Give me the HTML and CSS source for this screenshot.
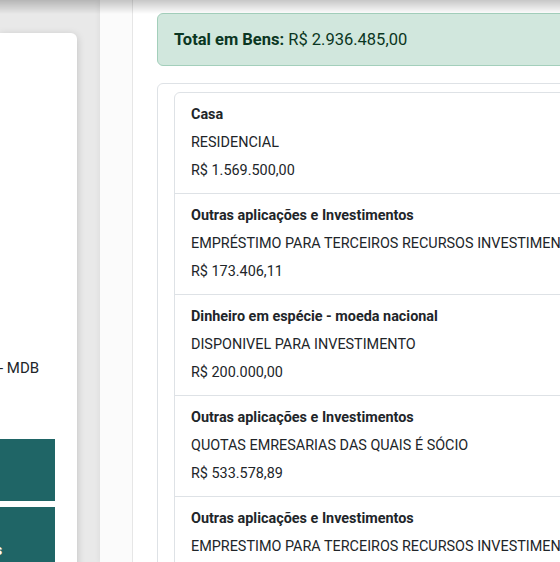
FILE: index.html
```html
<!DOCTYPE html>
<html lang="pt-BR">
<head>
  <meta charset="UTF-8">
  <meta name="viewport" content="width=device-width, initial-scale=1.0">
  <title>Bens Declarados</title>
  <link rel="stylesheet" href="styles.css">
</head>
<body>

  <div class="top-shade"></div>

  <div class="layout">
    <aside class="side-col">
      <div class="side-card">
        <p class="side-note">- MDB</p>
        <div class="side-actions">
          <button class="side-btn">Editar</button>
          <button class="side-btn">Imóveis</button>
        </div>
      </div>
    </aside>

    <main class="panel">
      <div class="panel-gutter"></div>
      <div class="panel-body">
        <div class="alert-total">
          <strong>Total em Bens:</strong> R$ 2.936.485,00
        </div>

        <div class="bens-card">
          <ul class="bens-list">
            <li class="bem-item">
              <p class="bem-title">Casa</p>
              <p class="bem-desc">RESIDENCIAL</p>
              <p class="bem-value">R$ 1.569.500,00</p>
            </li>
            <li class="bem-item">
              <p class="bem-title">Outras aplicações e Investimentos</p>
              <p class="bem-desc">EMPRÉSTIMO PARA TERCEIROS RECURSOS INVESTIMENTO</p>
              <p class="bem-value">R$ 173.406,11</p>
            </li>
            <li class="bem-item">
              <p class="bem-title">Dinheiro em espécie - moeda nacional</p>
              <p class="bem-desc">DISPONIVEL PARA INVESTIMENTO</p>
              <p class="bem-value">R$ 200.000,00</p>
            </li>
            <li class="bem-item">
              <p class="bem-title">Outras aplicações e Investimentos</p>
              <p class="bem-desc">QUOTAS EMRESARIAS DAS QUAIS É SÓCIO</p>
              <p class="bem-value">R$ 533.578,89</p>
            </li>
            <li class="bem-item">
              <p class="bem-title">Outras aplicações e Investimentos</p>
              <p class="bem-desc">EMPRESTIMO PARA TERCEIROS RECURSOS INVESTIMENTO</p>
              <p class="bem-value">R$ 250.000,00</p>
            </li>
          </ul>
        </div>
      </div>
    </main>
  </div>

</body>
</html>
```

FILE: styles.css
```css
/* Basic styling */
html, body {
  margin: 0;
  height: 562px;
  overflow: hidden;
  font-family: Roboto, "Liberation Sans", Arial, sans-serif;
  color: #212529;
  background-color: #e9e9e9;
}

/* shadow from the fixed header above */
.top-shade {
  position: fixed;
  top: 0;
  left: 0;
  right: 0;
  height: 14px;
  background: linear-gradient(rgba(0, 0, 0, 0.22), rgba(0, 0, 0, 0));
  z-index: 10;
}

.layout {
  display: flex;
  height: 100%;
}

/* left column */
.side-col {
  flex: 0 0 100px;
}

.side-card {
  width: 77px;
  height: 100%;
  margin-top: 33px;
  padding-top: 325px;
  box-sizing: border-box;
  background: #fff;
  border-radius: 0 6px 0 0;
  box-shadow: 0 2px 8px rgba(0, 0, 0, 0.18);
}

.side-note {
  margin: 0 0 60px -1px;
  font-size: 15px;
  line-height: 21px;
  white-space: nowrap;
}

.side-actions {
  display: flex;
  flex-direction: column;
  gap: 6px;
  margin-left: -100px;
  width: 155px;
}

.side-btn {
  height: 62px;
  padding: 24px 0 0;
  border: none;
  background-color: #1f6566;
  color: #fff;
  font-family: inherit;
  font-size: 14px;
  font-weight: bold;
  text-align: center;
}

/* right panel */
.panel {
  flex: 0 0 720px;
  display: flex;
  background: #fff;
  box-shadow: -2px 0 4px rgba(0, 0, 0, 0.04);
}

.panel-gutter {
  flex: 0 0 32px;
  background: #fbfbfb;
  border-right: 1px solid #e6e6e6;
}

.panel-body {
  flex: 1;
  padding: 13px 0 0 24px;
}

.alert-total {
  padding: 16px;
  border: 1px solid #a3cfbb;
  border-radius: 6px;
  background-color: #d1e7dd;
  color: #0a3622;
  font-size: 16.5px;
  line-height: 19px;
  margin-bottom: 17px;
}

.bens-card {
  padding: 8px 0 0 16px;
  border: 1px solid #dee2e6;
  border-radius: 6px;
}

.bens-list {
  list-style: none;
  margin: 0;
  padding: 0;
  border: 1px solid #dee2e6;
  border-radius: 6px;
}

.bem-item {
  padding: 12px 16px;
  border-top: 1px solid #dee2e6;
}

.bem-item:first-child {
  border-top: none;
}

.bem-item p {
  margin: 0 0 8px;
  font-size: 14.4px;
  line-height: 20px;
  white-space: nowrap;
}

.bem-item p:last-child {
  margin-bottom: 0;
}

.bem-title {
  font-weight: bold;
}
```
